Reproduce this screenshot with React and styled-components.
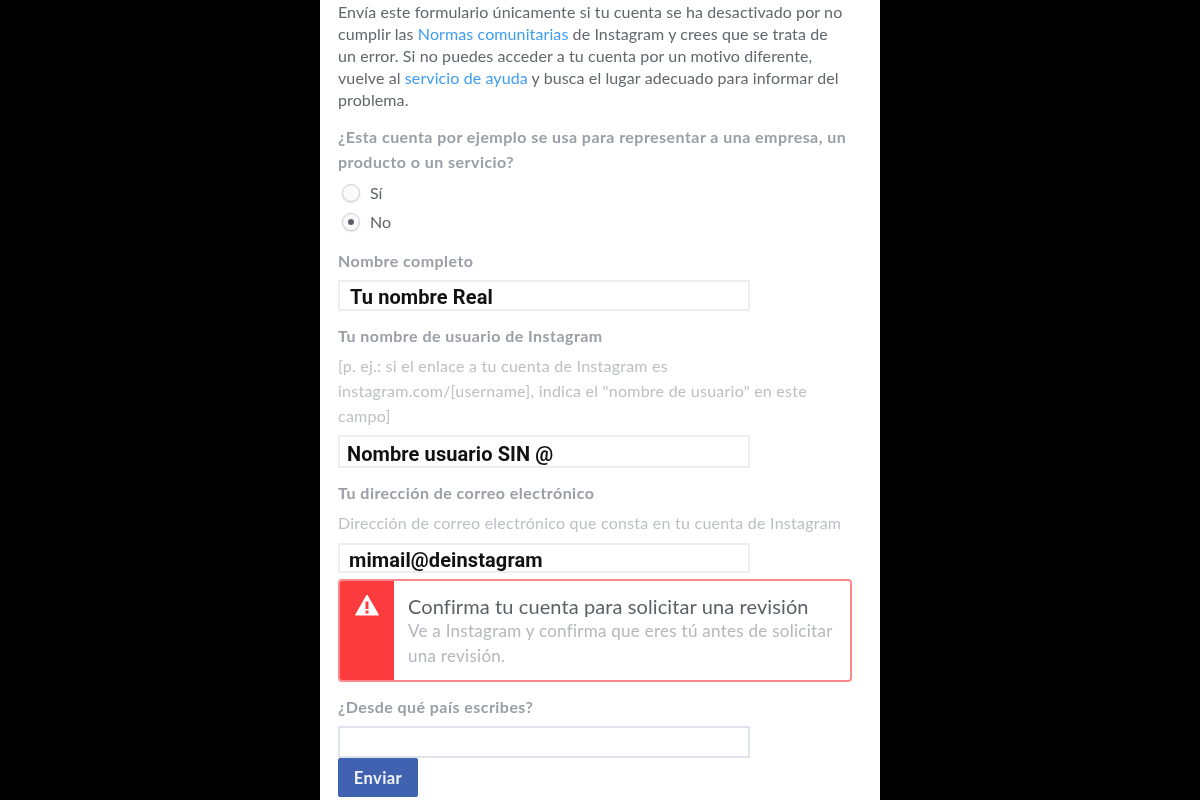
import React from 'react'
import styled, { createGlobalStyle } from 'styled-components'

const Global = createGlobalStyle`
  html, body {
    margin: 0;
    height: 100%;
    background: #000;
    overflow: hidden;
  }
`

const Page = styled.div`
  width: 560px;
  height: 800px;
  margin: 0 auto;
  padding: 1px 28px 0 18px;
  box-sizing: border-box;
  background: #fff;
  overflow: hidden;
  font-family: "Lato", "Liberation Sans", sans-serif;
  filter: blur(0.45px);
`

const Intro = styled.p`
  margin: 0;
  max-width: 508px;
  font-size: 16px;
  line-height: 22px;
  letter-spacing: 0.1px;
  color: #63666c;
`

const Anchor = styled.a`
  color: #3f9df2;
  text-decoration: none;
`

const Question = styled.div`
  margin-top: ${p => p.$top}px;
  font-size: 16px;
  font-weight: 700;
  line-height: 25px;
  letter-spacing: 0.45px;
  color: #9b9ea6;
`

const Radios = styled.div`
  display: flex;
  flex-direction: column;
  gap: 9px;
  margin-top: 8px;
`

const RadioRow = styled.label`
  display: flex;
  align-items: center;
  gap: 10px;
  height: 20px;
  padding-left: 4px;
  font-size: 16px;
  color: #5f6268;
`

const RadioDot = styled.span`
  width: 18px;
  height: 18px;
  margin-top: 2px;
  box-sizing: border-box;
  border-radius: 50%;
  border: 1px solid #cfd1d6;
  box-shadow: 0 1px 2px rgba(0, 0, 0, 0.12);
  background: #fafafa;
  display: flex;
  align-items: center;
  justify-content: center;

  &::after {
    content: "";
    width: 6px;
    height: 6px;
    border-radius: 50%;
    background: ${p => (p.$on ? '#5b5e66' : 'transparent')};
  }
`

const Field = styled.div`
  width: 412px;
  height: ${p => p.$h}px;
  margin-top: ${p => p.$top}px;
  padding-left: ${p => p.$pad}px;
  padding-top: ${p => p.$drop || 0}px;
  box-sizing: border-box;
  border: 2px solid ${p => p.$line || '#eeeef0'};
  background: #fff;
  display: flex;
  align-items: center;
  font-family: "Roboto", "Liberation Sans", sans-serif;
  font-size: 20px;
  font-weight: 700;
  letter-spacing: 0.1px;
  color: #111;
  white-space: nowrap;
`

const Hint = styled.div`
  margin-top: ${p => p.$top}px;
  max-width: 508px;
  font-size: 16px;
  line-height: 25px;
  letter-spacing: 0.24px;
  color: #bdbfc4;
`

const Alert = styled.div`
  display: flex;
  width: 514px;
  height: 103px;
  margin-top: 6px;
  box-sizing: border-box;
  border: 2px solid #fb8a8e;
  border-radius: 4px;
  overflow: hidden;
`

const AlertSide = styled.div`
  width: 54px;
  flex-shrink: 0;
  background: #fc3b3e;
  display: flex;
  justify-content: center;
  padding-top: 13px;
  box-sizing: border-box;
`

const AlertBody = styled.div`
  padding: 13px 0 0 14px;
`

const AlertTitle = styled.div`
  font-size: 20px;
  line-height: 24px;
  letter-spacing: 0.1px;
  color: #5c5f66;
`

const AlertText = styled.div`
  font-size: 17px;
  line-height: 25px;
  letter-spacing: 0.27px;
  color: #b5b7bd;
`

const Send = styled.button`
  display: block;
  width: 80px;
  height: 39px;
  padding: 0;
  border: 1px solid #3d62ad;
  border-radius: 2px;
  background: #4062b0;
  color: #f1f3f8;
  font-family: inherit;
  font-size: 16.5px;
  font-weight: 700;
  letter-spacing: 0.4px;
`

const App = () => {
  return (
    <Page>
      <Global />
      <Intro>
        Envía este formulario únicamente si tu cuenta se ha desactivado por no cumplir las{' '}
        <Anchor>Normas comunitarias</Anchor> de Instagram y crees que se trata de un error. Si no
        puedes acceder a tu cuenta por un motivo diferente, vuelve al{' '}
        <Anchor>servicio de ayuda</Anchor> y busca el lugar adecuado para informar del problema.
      </Intro>

      <Question $top={13}>¿Esta cuenta por ejemplo se usa para representar a una empresa, un producto o un servicio?</Question>
      <Radios>
        <RadioRow><RadioDot />Sí</RadioRow>
        <RadioRow><RadioDot $on />No</RadioRow>
      </Radios>

      <Question $top={17}>Nombre completo</Question>
      <Field $top={7} $h={31} $pad={10} $drop={2}>Tu nombre Real</Field>

      <Question $top={12}>Tu nombre de usuario de Instagram</Question>
      <Hint $top={5}>
        [p. ej.: si el enlace a tu cuenta de Instagram es instagram.com/[username], indica el "nombre de usuario" en este campo]
      </Hint>
      <Field $top={7} $h={33} $pad={7} $drop={5}>Nombre usuario SIN @</Field>

      <Question $top={12}>Tu dirección de correo electrónico</Question>
      <Hint $top={5}>Dirección de correo electrónico que consta en tu cuenta de Instagram</Hint>
      <Field $top={8} $h={30} $pad={9} $drop={4}>mimail@deinstagram</Field>

      <Alert>
        <AlertSide>
          <svg width="24" height="22" viewBox="0 0 24 22">
            <path d="M12 1 L23.5 21 H0.5 Z" fill="#fff" stroke="#fff" strokeWidth="1" strokeLinejoin="round" />
            <rect x="10.5" y="7.5" width="3" height="7.5" fill="#fc3b3e" />
            <rect x="10.5" y="16.5" width="3" height="3" fill="#fc3b3e" />
          </svg>
        </AlertSide>
        <AlertBody>
          <AlertTitle>Confirma tu cuenta para solicitar una revisión</AlertTitle>
          <AlertText>Ve a Instagram y confirma que eres tú antes de solicitar una revisión.</AlertText>
        </AlertBody>
      </Alert>

      <Question $top={12}>¿Desde qué país escribes?</Question>
      <Field $top={7} $h={32} $pad={8} $line="#dfe3ee" />
      <Send>Enviar</Send>
    </Page>
  )
}

export default App
